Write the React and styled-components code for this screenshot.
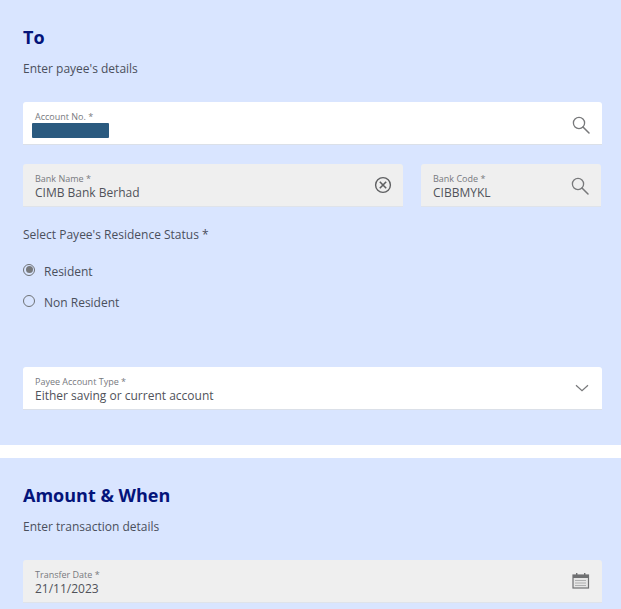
import React from "react";
import styled, { createGlobalStyle } from "styled-components";

const Global = createGlobalStyle`
  html, body { margin: 0; padding: 0; background: #fff; }
  body { width: 621px; height: 609px; overflow: hidden; font-family: "Open Sans", "Liberation Sans", sans-serif; }
`;

const Page = styled.div`
  display: flex;
  flex-direction: column;
  gap: 13px;
  width: 621px;
`;

const Section = styled.section`
  background: #d9e5ff;
  padding: ${(p) => p.$top}px 19px ${(p) => p.$bottom}px 23px;
  display: flex;
  flex-direction: column;
  height: ${(p) => p.$height}px;
  box-sizing: border-box;
`;

const Title = styled.h2`
  margin: 0;
  font-size: 18px;
  line-height: 24px;
  font-weight: 700;
  color: #04147a;
`;

const Subtitle = styled.p`
  margin: 11px 0 0;
  font-size: 12px;
  line-height: 18px;
  color: #4a4f5c;
`;

const Row = styled.div`
  display: flex;
  gap: 18px;
  margin-top: ${(p) => p.$top}px;
`;

const Field = styled.div`
  box-sizing: border-box;
  height: 43px;
  width: ${(p) => p.$width}px;
  flex: none;
  background: ${(p) => (p.$disabled ? "#efefef" : "#ffffff")};
  border-radius: 3px 3px 0 0;
  border-bottom: 1px solid ${(p) => (p.$disabled ? "#dfe3ea" : "#dbe0e8")};
  padding: 8px 12px 0;
  display: flex;
  align-items: flex-start;
  justify-content: space-between;
`;

const FieldText = styled.div`
  display: flex;
  flex-direction: column;
  min-width: 0;
`;

const FieldLabel = styled.span`
  font-size: 9px;
  line-height: 13px;
  color: #77797e;
  white-space: nowrap;
`;

const FieldValue = styled.span`
  font-size: 12px;
  line-height: 15px;
  color: #50525a;
  white-space: nowrap;
`;

const Masked = styled.span`
  display: block;
  width: 77px;
  height: 15px;
  margin: 0 0 0 -3px;
  background: #2a5a7f;
  border-radius: 1px;
`;

const IconSlot = styled.span`
  display: flex;
  flex: none;
  margin-top: ${(p) => p.$top}px;
  margin-right: ${(p) => p.$right}px;
  color: #77787a;
`;

const GroupLabel = styled.div`
  margin-top: 19px;
  font-size: 12px;
  line-height: 18px;
  color: #4a4f5c;
`;

const RadioGroup = styled.div`
  display: flex;
  flex-direction: column;
  gap: 13px;
  margin-top: 18px;
`;

const RadioRow = styled.label`
  display: flex;
  align-items: center;
  gap: 9px;
  height: 18px;
  font-size: 12px;
  color: #4a4f5c;
`;

const RadioCircle = styled.span`
  box-sizing: border-box;
  width: 12px;
  height: 12px;
  margin-top: -3px;
  margin-left: 0;
  border: 1px solid #6f7276;
  border-radius: 50%;
  display: flex;
  align-items: center;
  justify-content: center;
  &::after {
    content: "";
    display: ${(p) => (p.$checked ? "block" : "none")};
    width: 7px;
    height: 7px;
    border-radius: 50%;
    background: #77797c;
  }
`;

const SearchIcon = () => (
  <svg width="18" height="18" viewBox="0 0 18 18" fill="none" stroke="currentColor" strokeWidth="1.3">
    <circle cx="7" cy="7" r="5.6" />
    <path d="M11 11l6 6" strokeLinecap="round" strokeWidth="1.5" />
  </svg>
);

const ClearIcon = () => (
  <svg width="18" height="18" viewBox="0 0 18 18" fill="none" stroke="#5f6062" strokeWidth="1.4">
    <circle cx="9" cy="9" r="7.4" />
    <path d="M5.8 5.8l6.4 6.4M12.2 5.8l-6.4 6.4" strokeWidth="1.6" />
  </svg>
);

const ChevronIcon = () => (
  <svg width="14" height="8" viewBox="0 0 14 8" fill="none" stroke="currentColor" strokeWidth="1.2">
    <path d="M1 1.2l6 5.6 6-5.6" />
  </svg>
);

const CalendarIcon = () => (
  <svg width="18" height="16" viewBox="0 0 18 16" fill="none">
    <rect x="1" y="2" width="15.5" height="13" fill="#e6e6e6" stroke="#6f7072" strokeWidth="1.2" />
    <rect x="1" y="2" width="15.5" height="3" fill="#6f7072" />
    <rect x="4" y="0" width="1.4" height="3" fill="#6f7072" />
    <rect x="12" y="0" width="1.4" height="3" fill="#6f7072" />
    <path d="M3.5 7.5h10.5M3.5 10h10.5M3.5 12.5h10.5" stroke="#77787a" strokeWidth="1" strokeDasharray="1 1" />
  </svg>
);

export default function App() {
  return (
    <>
      <Global />
      <Page>
        <Section $top={25} $bottom={37} $height={445}>
          <Title>To</Title>
          <Subtitle>Enter payee's details</Subtitle>
          <Row $top={24}>
            <Field $width={579}>
              <FieldText>
                <FieldLabel>Account No. *</FieldLabel>
                <Masked />
              </FieldText>
              <IconSlot $top={6} $right={0}><SearchIcon /></IconSlot>
            </Field>
          </Row>
          <Row $top={19}>
            <Field $width={380} $disabled>
              <FieldText>
                <FieldLabel>Bank Name *</FieldLabel>
                <FieldValue>CIMB Bank Berhad</FieldValue>
              </FieldText>
              <IconSlot $top={4} $right={-1}><ClearIcon /></IconSlot>
            </Field>
            <Field $width={180} $disabled>
              <FieldText>
                <FieldLabel>Bank Code *</FieldLabel>
                <FieldValue>CIBBMYKL</FieldValue>
              </FieldText>
              <IconSlot $top={5} $right={0}><SearchIcon /></IconSlot>
            </Field>
          </Row>
          <GroupLabel>Select Payee's Residence Status *</GroupLabel>
          <RadioGroup>
            <RadioRow>
              <RadioCircle $checked />
              Resident
            </RadioRow>
            <RadioRow>
              <RadioCircle />
              Non Resident
            </RadioRow>
          </RadioGroup>
          <Row $top={56}>
            <Field $width={579}>
              <FieldText>
                <FieldLabel>Payee Account Type *</FieldLabel>
                <FieldValue>Either saving or current account</FieldValue>
              </FieldText>
              <IconSlot $top={9} $right={1}><ChevronIcon /></IconSlot>
            </Field>
          </Row>
        </Section>
        <Section $top={25} $bottom={0} $height={151}>
          <Title>Amount &amp; When</Title>
          <Subtitle>Enter transaction details</Subtitle>
          <Row $top={24}>
            <Field $width={579} $disabled>
              <FieldText>
                <FieldLabel>Transfer Date *</FieldLabel>
                <FieldValue>21/11/2023</FieldValue>
              </FieldText>
              <IconSlot $top={5} $right={0}><CalendarIcon /></IconSlot>
            </Field>
          </Row>
        </Section>
      </Page>
    </>
  );
}
